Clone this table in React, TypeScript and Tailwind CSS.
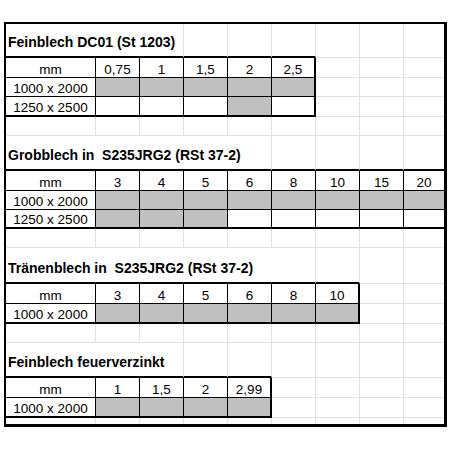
import React from "react";

type Section = {
  title: string;
  span: number;
  head: string[];
  rows: { label: string; grey: number[] }[];
};

// price list sheet, one block per material
const sections: Section[] = [
  {
    title: "Feinblech DC01 (St 1203)",
    span: 3,
    head: ["0,75", "1", "1,5", "2", "2,5"],
    rows: [
      { label: "1000 x 2000", grey: [1, 1, 1, 1, 1] },
      { label: "1250 x 2500", grey: [0, 0, 0, 1, 0] },
    ],
  },
  {
    title: "Grobblech in  S235JRG2 (RSt 37-2)",
    span: 5,
    head: ["3", "4", "5", "6", "8", "10", "15", "20"],
    rows: [
      { label: "1000 x 2000", grey: [1, 1, 1, 1, 1, 1, 1, 1] },
      { label: "1250 x 2500", grey: [1, 1, 1, 0, 0, 0, 0, 0] },
    ],
  },
  {
    title: "Tränenblech in  S235JRG2 (RSt 37-2)",
    span: 6,
    head: ["3", "4", "5", "6", "8", "10"],
    rows: [{ label: "1000 x 2000", grey: [1, 1, 1, 1, 1, 1] }],
  },
  {
    title: "Feinblech feuerverzinkt",
    span: 3,
    head: ["1", "1,5", "2", "2,99"],
    rows: [{ label: "1000 x 2000", grey: [1, 1, 1, 1] }],
  },
];

type Row =
  | { kind: "title"; s: Section }
  | { kind: "head"; s: Section }
  | { kind: "data"; s: Section; i: number }
  | { kind: "empty" };

const rows: Row[] = [];
sections.forEach((s) => {
  rows.push({ kind: "title", s });
  rows.push({ kind: "head", s });
  s.rows.forEach((_, i) => rows.push({ kind: "data", s, i }));
  rows.push({ kind: "empty" });
});

const COLS = 9;

const spanCls: { [key: number]: string } = {
  3: "col-span-3",
  5: "col-span-5",
  6: "col-span-6",
};

const inTable = (r: number, c: number) => {
  const row = rows[r];
  if (!row || row.kind === "title" || row.kind === "empty") return false;
  return c <= row.s.head.length;
};

const rightCls = (r: number, c: number) => {
  if (c === COLS - 1) return "border-r-0";
  const a = inTable(r, c);
  const b = inTable(r, c + 1);
  if (a && b) return "border-r border-r-black";
  if (a !== b) return "border-r-2 border-r-black";
  return "border-r border-r-[#e2e2e2]";
};

const bottomCls = (r: number, c: number) => {
  if (r === rows.length - 1) return "border-b-0";
  const a = inTable(r, c);
  const b = inTable(r + 1, c);
  if (a && b) return "border-b border-b-black";
  if (a !== b) return "border-b-2 border-b-black";
  return "border-b border-b-[#e2e2e2]";
};

const Cell = ({
  r,
  c,
  children,
  grey,
}: {
  r: number;
  c: number;
  children?: React.ReactNode;
  grey?: boolean;
}) => (
  <div
    className={`flex items-end justify-center overflow-visible whitespace-nowrap text-[13.5px] leading-[14px] ${rightCls(r, c)} ${bottomCls(r, c)} ${grey ? "bg-[#c0c0c0]" : ""}`}
  >
    {children}
  </div>
);

export default function App() {
  return (
    <div className="min-h-[450px] w-[450px] bg-white pl-[4px] pt-[22px] font-['Liberation_Sans',Arial,sans-serif] text-black">
      <div className="grid w-fit grid-cols-[90px_repeat(7,44px)_40px] grid-rows-[34px_20px_19px_20px_19px_35px_20px_19px_19px_19px_36px_20px_20px_19px_35px_20px_20px_6px] border-b-[3px] border-l-2 border-r-[3px] border-t-2 border-black">
        {rows.map((row, r) => {
          const cells: React.ReactNode[] = [];
          if (row.kind === "title") {
            const last = row.s.span - 1;
            cells.push(
              <div
                key={`${r}-t`}
                className={`${spanCls[row.s.span]} flex items-end whitespace-pre pb-[6px] pl-[2px] text-[14px] font-bold leading-[16px] ${rightCls(r, last)} ${bottomCls(r, last)}`}
              >
                {row.s.title}
              </div>
            );
            for (let c = row.s.span; c < COLS; c++) cells.push(<Cell key={`${r}-${c}`} r={r} c={c} />);
          } else {
            for (let c = 0; c < COLS; c++) {
              let text: string | undefined;
              let grey = false;
              if (row.kind === "head") {
                text = c === 0 ? "mm" : row.s.head[c - 1];
              } else if (row.kind === "data") {
                const d = row.s.rows[row.i];
                if (c === 0) text = d.label;
                else grey = d.grey[c - 1] === 1;
              }
              cells.push(
                <Cell key={`${r}-${c}`} r={r} c={c} grey={grey}>
                  {text}
                </Cell>
              );
            }
          }
          return <React.Fragment key={r}>{cells}</React.Fragment>;
        })}
      </div>
    </div>
  );
}
